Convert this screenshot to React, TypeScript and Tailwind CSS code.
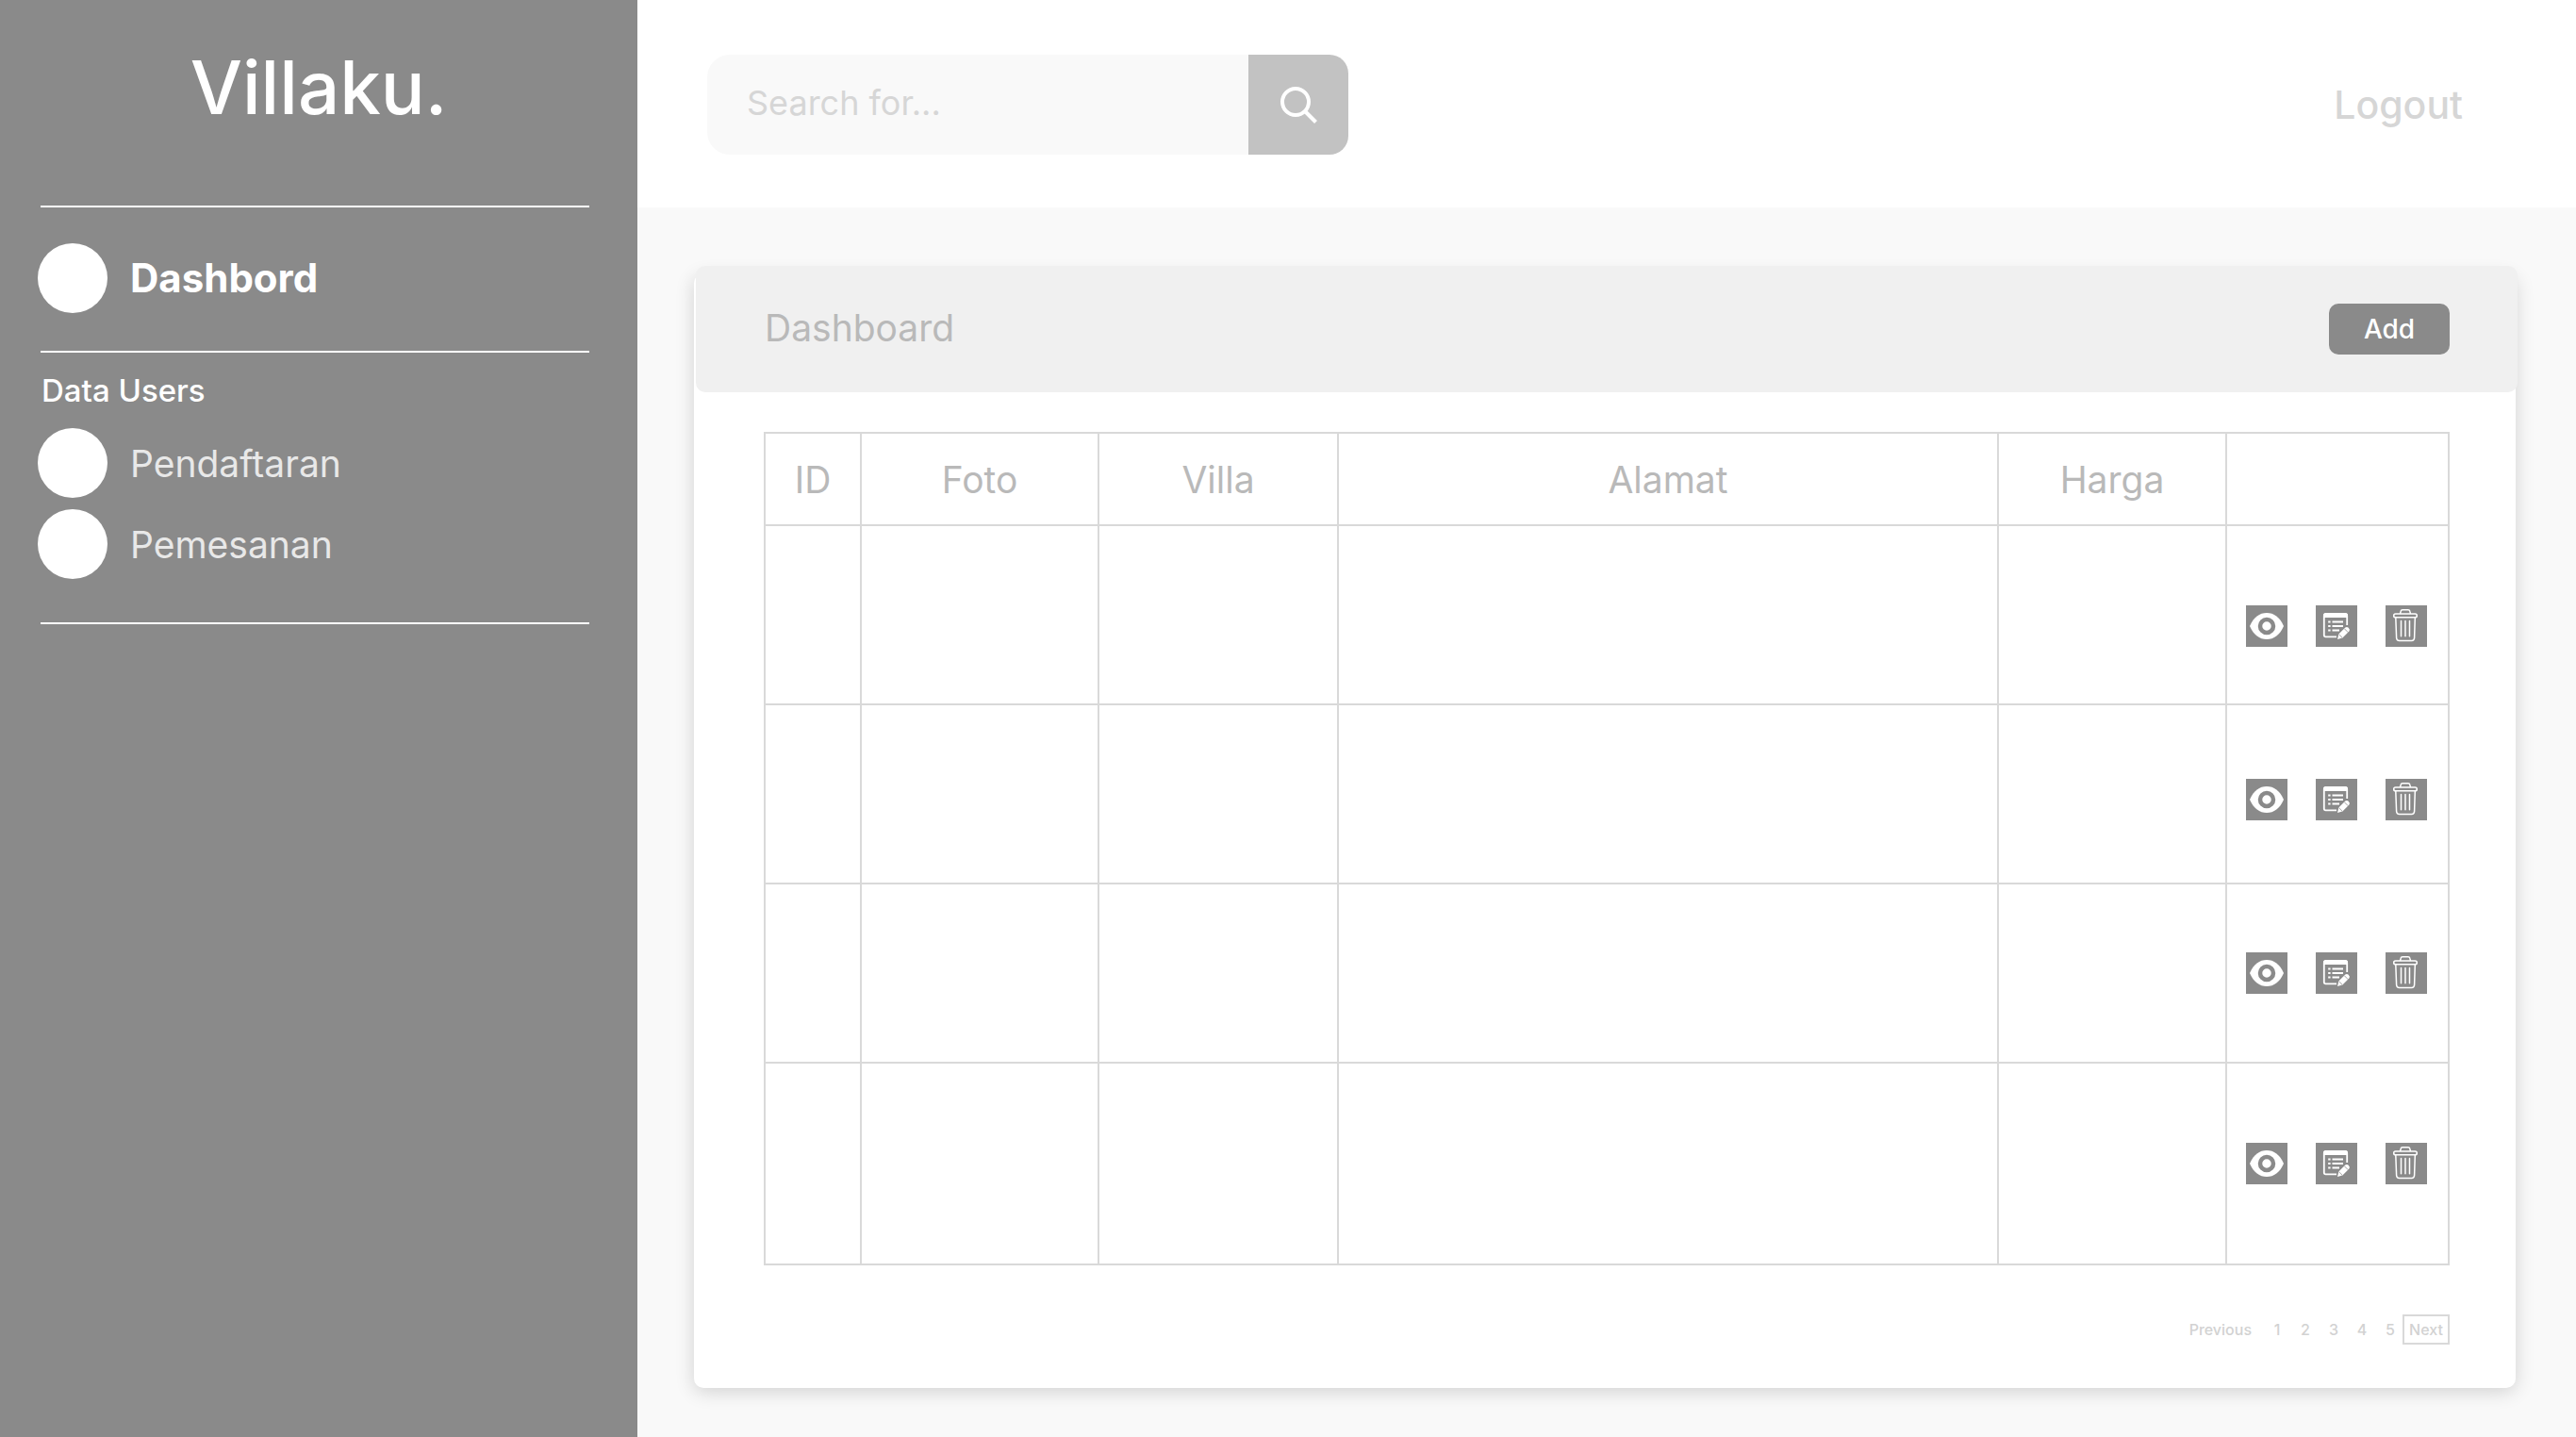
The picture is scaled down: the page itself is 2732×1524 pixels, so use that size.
const rows = [
  { id: 1, cell: "h-[190px] pt-6" },
  { id: 2, cell: "h-[190px] pt-3" },
  { id: 3, cell: "h-[190px]" },
  { id: 4, cell: "h-[214px]" },
];

const columns = ["ID", "Foto", "Villa", "Alamat", "Harga", ""];

function SearchIcon() {
  return (
    <svg viewBox="0 0 40 40" className="size-10" fill="none" stroke="white" strokeWidth="4" aria-hidden="true">
      <circle cx="17" cy="17" r="14" />
      <path d="M27 27 L38.5 38.5" />
    </svg>
  );
}

function EyeIcon() {
  return (
    <svg viewBox="0 0 44 44" className="size-11" aria-hidden="true">
      <path d="M4 22 C8 12.5 14.5 8 22 8 S36 12.5 40 22 C36 31.5 29.5 36 22 36 S8 31.5 4 22 Z" fill="white" />
      <circle cx="22" cy="22" r="7" fill="white" stroke="#8a8a8a" strokeWidth="4.5" />
    </svg>
  );
}

function EditIcon() {
  return (
    <svg viewBox="0 0 44 44" className="size-11" fill="none" stroke="white" aria-hidden="true">
      <path d="M33.2 21 V11 Q33.2 9.2 31.4 9.2 H10.6 Q8.8 9.2 8.8 11 V31.5 Q8.8 33.3 10.6 33.3 H22" strokeWidth="1.8" />
      <path d="M8 13 V10.5 Q8 8 10.5 8 H31.5 Q34 8 34 10.5 V13 Z" fill="white" stroke="none" />
      <path d="M17.5 17.5 H29 M17.5 22 H29 M17.5 26.5 H25" strokeWidth="2" />
      <path d="M13.2 17.5 H15.6 M13.2 22 H15.6 M13.2 26.5 H15.6" strokeWidth="2.2" />
      <path d="M23 36 L24.3 30.5 L31.3 23.6 Q33 22.2 34.7 23.8 Q36.8 25.7 35.4 27.5 L28.4 34.5 Z" fill="white" stroke="none" />
      <path d="M30.3 24.7 L34.3 28.7 M24.6 30.8 L28 34.2" stroke="#8a8a8a" strokeWidth="0.8" />
    </svg>
  );
}

function TrashIcon() {
  return (
    <svg viewBox="0 0 44 44" className="size-11" fill="none" stroke="white" strokeWidth="1.5" aria-hidden="true">
      <rect x="8.7" y="9" width="24.6" height="3.8" rx="1.9" />
      <path d="M15.5 9 L16.2 6.2 Q16.5 4.8 18 4.8 H24 Q25.5 4.8 25.8 6.2 L26.5 9" />
      <path d="M10.8 13 L11.6 34.5 Q11.8 37.5 14.6 37.5 H27.7 Q30.4 37.5 30.6 34.5 L31.3 13" />
      <path d="M16.5 16.5 V32.8 M21 16.5 V32.8 M25.5 16.5 V32.8" strokeLinecap="round" />
    </svg>
  );
}

function NavItem({ label, active }: { label: string; active?: boolean }) {
  return (
    <a href="#" className="flex items-center gap-6">
      <span className="size-[74px] rounded-full bg-white" />
      <span className={active ? "text-[42px] leading-none font-bold" : "text-[39px] leading-none text-[#e8e8e8]"}>
        {label}
      </span>
    </a>
  );
}

export default function App() {
  return (
    <div className="flex min-h-screen bg-[#f9f9f9] font-['Inter',sans-serif]">
      <aside className="w-[676px] shrink-0 bg-[#8a8a8a] text-white">
        <h1 className="flex h-[218px] items-start justify-center pt-[54px] text-[78px] leading-[78px] font-medium">
          Villaku.
        </h1>
        <nav className="pr-[51px] pl-10">
          <hr className="ml-[3px] border-t-2 border-white" />
          <div className="pt-[38px] pb-10">
            <NavItem label="Dashbord" active />
          </div>
          <hr className="ml-[3px] border-t-2 border-white" />
          <h2 className="pt-5 pl-1 text-[33px] leading-10 font-medium">Data Users</h2>
          <div className="flex flex-col gap-3 pt-5 pb-[46px]">
            <NavItem label="Pendaftaran" />
            <NavItem label="Pemesanan" />
          </div>
          <hr className="ml-[3px] border-t-2 border-white" />
        </nav>
      </aside>

      <div className="flex min-w-0 flex-1 flex-col">
        <header className="flex h-[220px] items-center justify-between bg-white pt-0.5 pr-[120px] pl-[74px]">
          <form className="flex h-[106px] w-[680px] overflow-hidden rounded-l-3xl rounded-r-[20px]">
            <input
              type="search"
              aria-label="Search"
              placeholder="Search for..."
              className="min-w-0 flex-1 bg-[#f9f9f9] px-[42px] pb-1 text-[36px] outline-none placeholder:text-[#d6d6d6]"
            />
            <button type="button" aria-label="Search" className="flex w-[106px] items-center justify-center bg-[#c2c2c2]">
              <SearchIcon />
            </button>
          </form>
          <a href="#" className="text-[41px] leading-none font-medium text-[#d6d6d6]">
            Logout
          </a>
        </header>

        <main className="flex-1 pt-[70px] pr-16 pb-[52px] pl-[60px]">
          <section className="flow-root rounded-[10px] bg-white shadow-[0_4px_20px_rgba(0,0,0,0.16)]">
            <div className="-mt-2 -mr-0.5 ml-0.5 flex h-[134px] items-center justify-between rounded-[10px] bg-[#f0f0f0] pr-[72px] pl-[73px]">
              <h2 className="pb-1 text-[39px] leading-none text-[#b9b9b9]">Dashboard</h2>
              <button type="button" className="h-[54px] w-32 rounded-[10px] bg-[#8a8a8a] text-[28px] leading-none font-medium text-white">
                Add
              </button>
            </div>

            <div className="px-[70px] pt-[42px] pb-[46px] pl-[74px]">
              <table className="w-full table-fixed border-collapse">
                <colgroup>
                  <col className="w-[102px]" />
                  <col className="w-[252px]" />
                  <col className="w-[254px]" />
                  <col />
                  <col className="w-[242px]" />
                  <col className="w-[236px]" />
                </colgroup>
                <thead>
                  <tr>
                    {columns.map((name) => (
                      <th
                        key={name}
                        scope="col"
                        className="h-[98px] border-2 border-[#d9d9d9] p-0 text-center text-[39px] leading-none font-normal text-[#b9b9b9]"
                      >
                        {name}
                      </th>
                    ))}
                  </tr>
                </thead>
                <tbody>
                  {rows.map((row) => (
                    <tr key={row.id}>
                      {columns.slice(1).map((name) => (
                        <td key={name} className="border-2 border-[#d9d9d9]" />
                      ))}
                      <td className={`border-2 border-[#d9d9d9] pl-5 ${row.cell}`}>
                        <div className="flex gap-[30px]">
                          <button type="button" aria-label="View" className="size-11 bg-[#8a8a8a]">
                            <EyeIcon />
                          </button>
                          <button type="button" aria-label="Edit" className="size-11 bg-[#8a8a8a]">
                            <EditIcon />
                          </button>
                          <button type="button" aria-label="Delete" className="size-11 bg-[#8a8a8a]">
                            <TrashIcon />
                          </button>
                        </div>
                      </td>
                    </tr>
                  ))}
                </tbody>
              </table>

              <nav aria-label="Pagination" className="mt-[52px] flex items-center justify-end text-base leading-none font-medium text-[#d2d2d2]">
                <a href="#" className="pr-[10px]">
                  Previous
                </a>
                {[1, 2, 3, 4, 5].map((page) => (
                  <a key={page} href="#" className="w-[30px] pl-1 text-center">
                    {page}
                  </a>
                ))}
                <a href="#" className="flex h-8 w-[50px] items-center justify-center border-2 border-[#d9d9d9]">
                  Next
                </a>
              </nav>
            </div>
          </section>
        </main>
      </div>
    </div>
  );
}
